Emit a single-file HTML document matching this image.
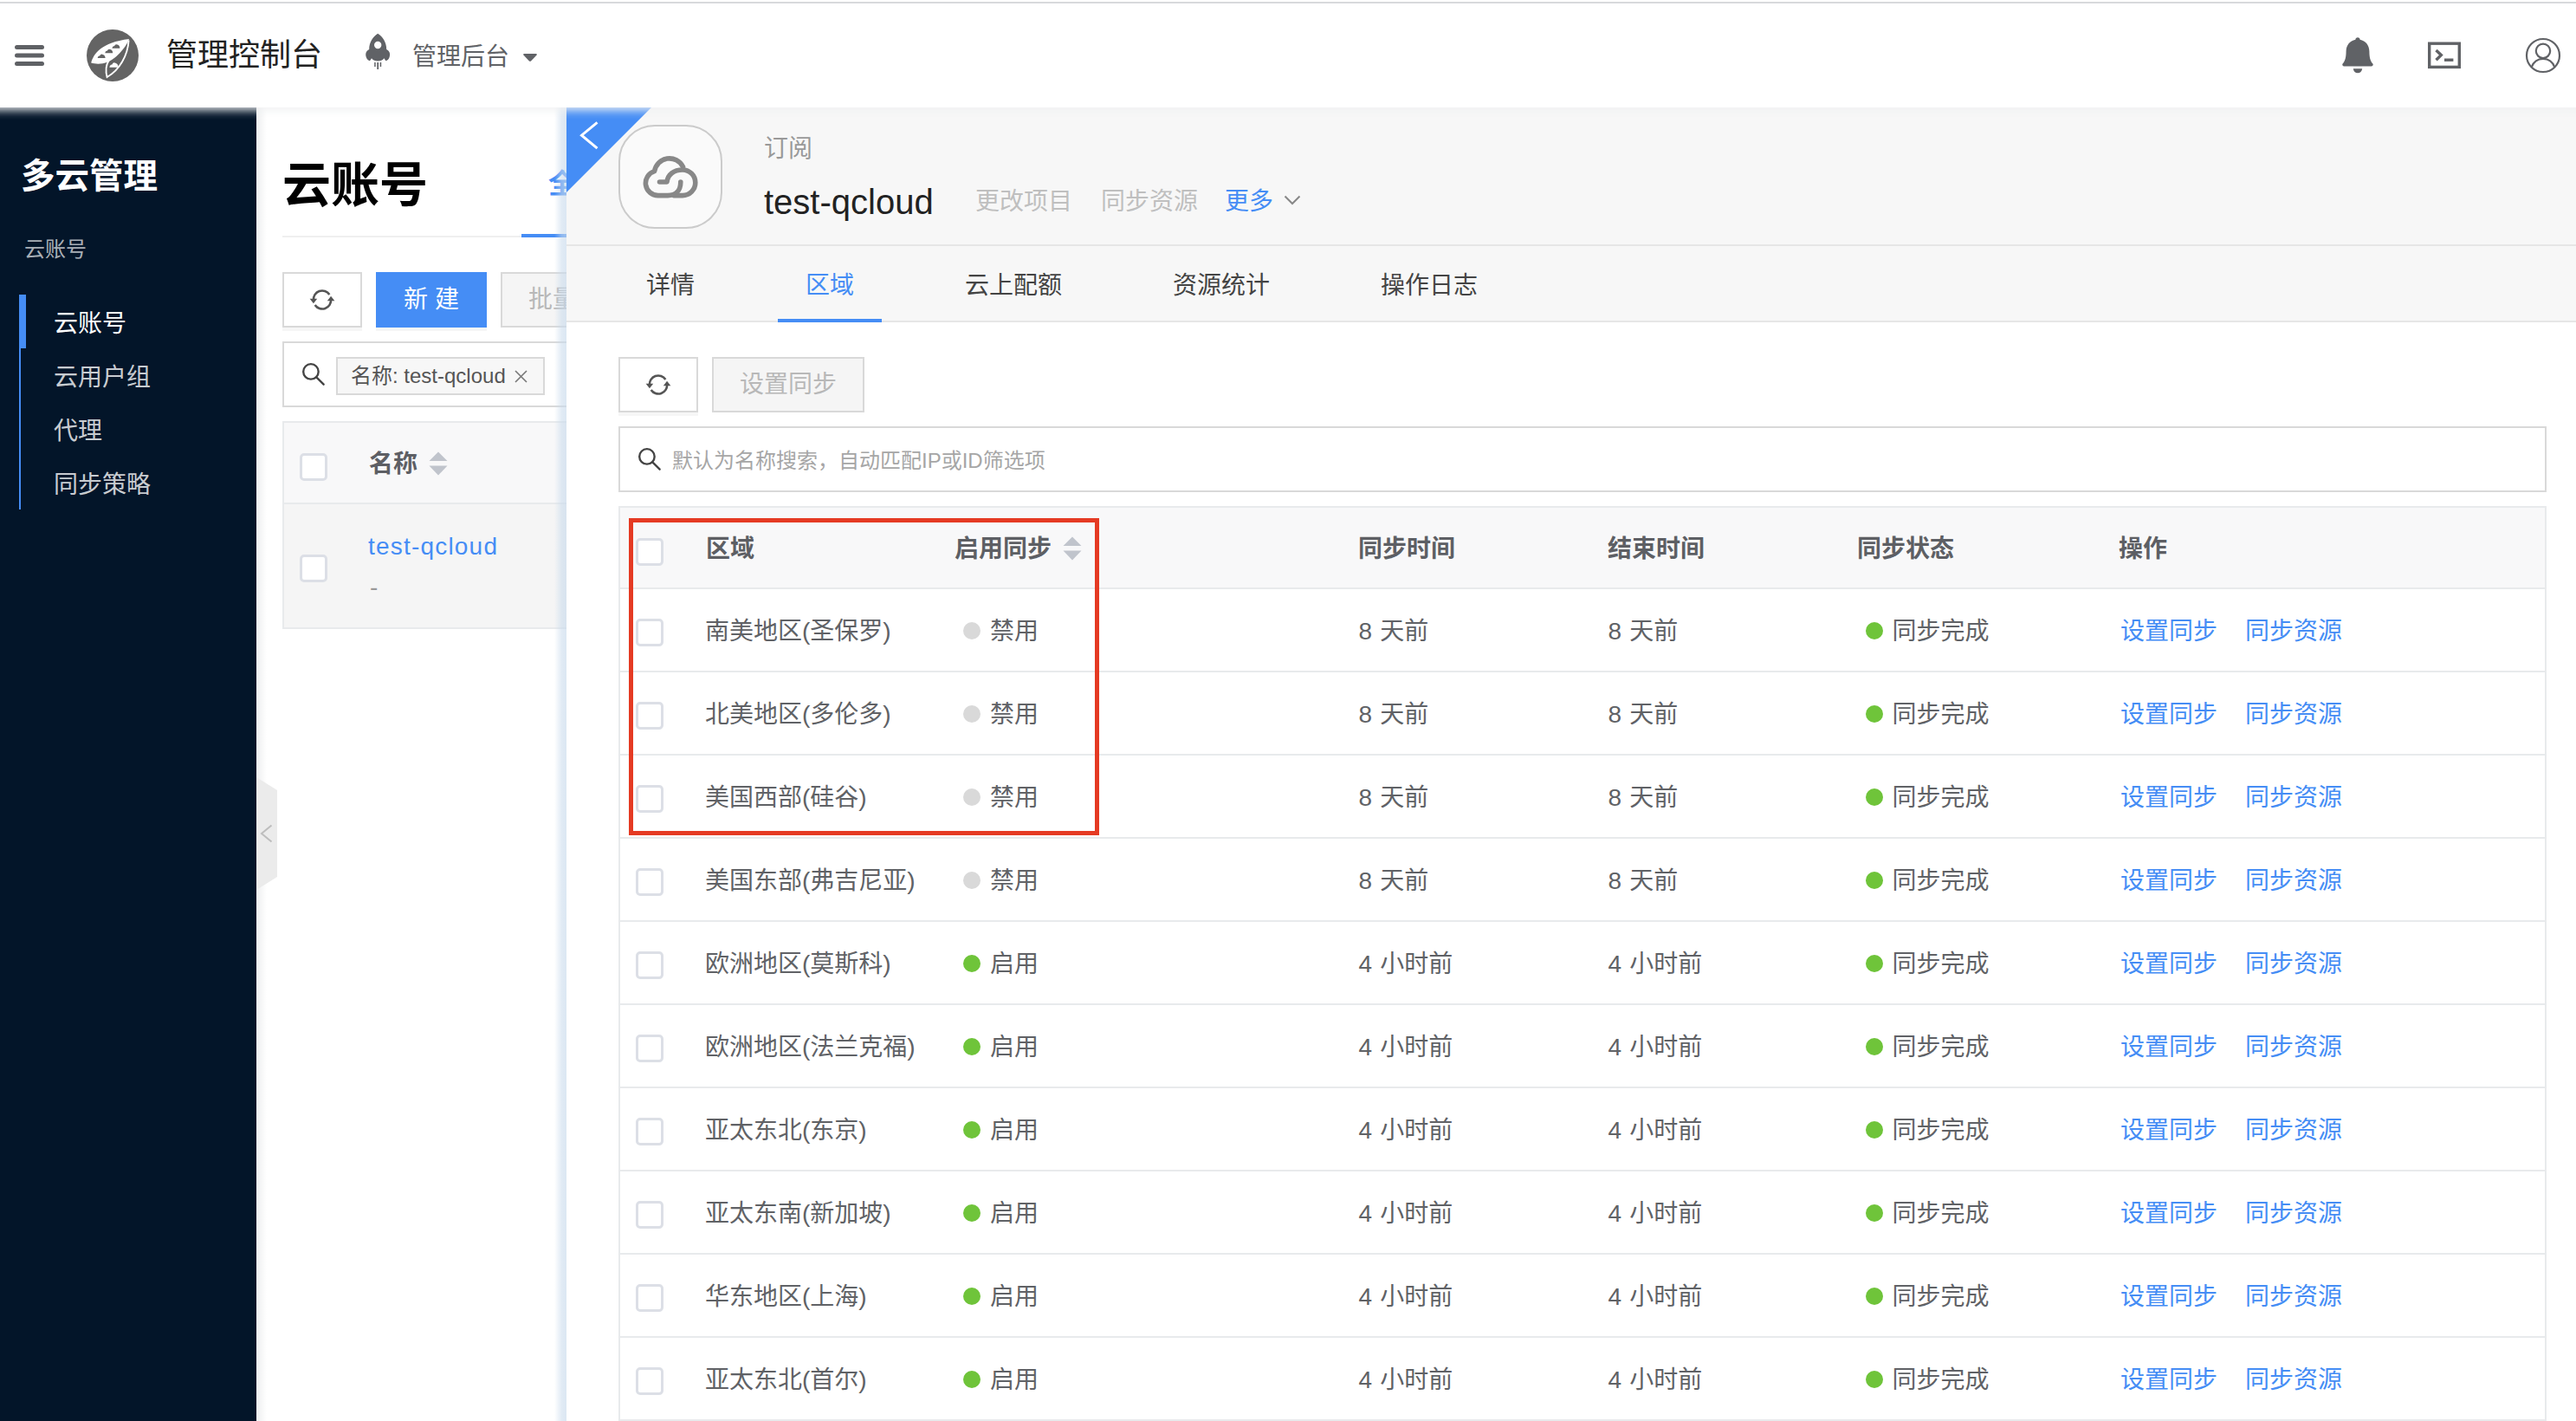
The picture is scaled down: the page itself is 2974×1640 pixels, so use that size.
<!DOCTYPE html>
<html lang="zh-CN"><head><meta charset="utf-8"><title>云账号</title>
<style>
*{margin:0;padding:0;box-sizing:border-box}
html,body{width:2974px;height:1640px;overflow:hidden;background:#fff}
body{position:relative;font-family:"Liberation Sans","Noto Sans CJK SC",sans-serif;color:#606266;font-size:28px}
div,span,i,svg,b{position:absolute;display:block;font-style:normal}
.t{white-space:nowrap;line-height:40px;height:40px}
b{font-weight:700}
/* header */
#hd{left:0;top:0;width:2974px;height:124px;background:#fff;z-index:50}
#hdsh{left:-60px;top:0;width:3094px;height:124px;background:#fff;box-shadow:0 3px 10px #f0f1f2;z-index:49}
#topline{left:0;top:2px;width:2974px;height:2px;background:#d8d9dc}
/* sidebar */
#sb{left:0;top:124px;width:296px;height:1516px;background:#031529;z-index:10}
/* list panel */
#lp{left:296px;top:124px;width:358px;height:1516px;background:#fff;overflow:hidden;z-index:5}
.btn{border:2px solid #d9d9d9;background:#fff;height:64px;box-shadow:0 4px 0 rgba(0,0,0,.035)}
.btn.dis{background:#f5f5f5;box-shadow:none;color:#b8b8b8}
.cb{width:32px;height:32px;border:3px solid #dcdfe6;border-radius:5px;background:#fff}
/* drawer */
#dr{left:654px;top:124px;width:2320px;height:1516px;background:#fff;z-index:20}
#drh{left:0;top:0;width:2320px;height:246px;background:#f7f7f7}
.ln{background:#e6e6e6;height:2px}
.tab{top:186px;font-size:28px;color:#444}
/* table */
#tbl{left:714px;top:0;width:2226px;height:1640px;z-index:30}
.row{left:0;width:2226px;height:96px;border-bottom:2px solid #e8eaec}
.row .t{top:29px}
.c1{left:100px}.c2{left:429px}.c3{left:854.5px;word-spacing:1.5px}.c4{left:1142.5px;word-spacing:1.5px}.c5{left:1470.5px}.c6{left:1734px}.c7{left:1878px}
.lk{color:#458DF5}
.dot{width:20px;height:20px;border-radius:50%;top:38px}
.dot.on{background:#6fc43a}.dot.off{background:#d9d9d9}
#redbox{left:726px;top:598px;width:543px;height:366px;border:5px solid #e53a23;z-index:40}
#tblside{left:714px;top:680px;width:2226px;height:960px;border-left:2px solid #e8eaec;border-right:2px solid #e8eaec;z-index:29}

</style></head><body>
<div id="hdsh"></div>
<div id="hd">
<div id="topline"></div>
<svg style="left:17px;top:52px" width="34" height="24" viewBox="0 0 34 24"><g fill="#5f6165"><rect x="0" y="0" width="34" height="5" rx="2.5"/><rect x="0" y="9.5" width="34" height="5" rx="2.5"/><rect x="0" y="19" width="34" height="5" rx="2.5"/></g></svg>
<svg style="left:100px;top:34px" width="60" height="60" viewBox="0 0 60 60">
<circle cx="30" cy="30" r="30" fill="#646464"/>
<path d="M5.2 38.5 C8 28 17 15 49.1 11 C45 22 32 35 24.5 37.5 C17 40.5 10 40 5.2 38.5Z" fill="#fff"/>
<path d="M48.6 12.5 C47.5 30 38 47 23.6 55 C21.5 47 23 40 25.5 36" fill="none" stroke="#fff" stroke-width="1.900"/>
<g fill="#646464"><path d="M29.4 21.8 q0.3-2.6 2.7-2.8 q1.1-2.8 3.4-1.4 q2.9 0.9 2.9 4.2z"/><path d="M21.200 27.300 q0.3-2.6 2.7-2.8 q1.1-2.8 3.4-1.4 q2.9 0.9 2.9 4.2z"/><path d="M12.600 33.100 q0.3-2.6 2.7-2.8 q1.1-2.8 3.4-1.4 q2.9 0.9 2.9 4.2z"/></g>
<path d="M26.400 43.800 q0.300-3 3-3.400 q1.400-3.200 4-1.600 q3.200 1.200 3.200 5z" fill="#fff"/>
</svg>
<span class="t" style="left:192px;top:42px;font-size:36px;color:#222;line-height:44px;height:44px">管理控制台</span>
<svg style="left:420px;top:37px" width="32" height="46" viewBox="0 0 32 46">
<g fill="#606266"><path d="M16.2 1.8 C22 5.5 26.2 12 26.2 20 C29.6 21.5 31 25 29.6 29 C28.8 31.5 27 33 25.4 33.2 L23.4 30.2 C22 32.4 19 33.4 16.2 33.4 C13.4 33.4 10.4 32.4 9 30.2 L7 33.2 C5.4 33 3.6 31.5 2.8 29 C1.4 25 2.8 21.5 6.2 20 C6.2 12 10.4 5.5 16.2 1.8Z"/>
<rect x="12.2" y="35" width="1.5" height="5"/><rect x="15.3" y="35" width="1.8" height="8"/><rect x="18.7" y="35" width="1.5" height="5"/></g>
<circle cx="16.2" cy="15" r="4.2" fill="#fff"/></svg>
<span class="t" style="left:476px;top:46px;font-size:28px;color:#606266">管理后台</span>
<svg style="left:603px;top:61px" width="18" height="11" viewBox="0 0 18 11"><path d="M2.2 1 H15.8 Q17.6 1.2 16.6 2.6 L10 9.4 Q9 10.2 8 9.4 L1.4 2.6 Q0.4 1.2 2.2 1Z" fill="#606266"/></svg>
<!-- bell -->
<svg style="left:2703px;top:42px" width="38" height="44" viewBox="0 0 38 44"><g fill="#606266">
<path d="M19 1.2 c1.6 0 2.6 1.2 2.6 2.6 c6.6 1.4 10.6 6.4 10.8 13.4 c0 7.6 1.4 11.6 4 14.4 c0.8 1.2 0.2 2.8-1.4 2.8 H3 c-1.6 0-2.2-1.6-1.4-2.8 c2.6-2.8 4-6.800 4-14.400 c0.200-7 4.200-12 10.800-13.400 c0-1.400 1-2.600 2.600-2.600z"/>
<path d="M13.800 37.200 h10.400 c-0.300 3-2.400 5-5.200 5 s-4.900-2-5.200-5z"/></g></svg>
<!-- terminal -->
<svg style="left:2803px;top:48px" width="38" height="32" viewBox="0 0 38 32"><g fill="none" stroke="#606266">
<rect x="1.700" y="2.200" width="34.600" height="27.200" stroke-width="3.400"/>
<path d="M9.500 10 l5.800 5.600 -5.800 5.600" stroke-width="3.400"/><path d="M19 21.200 h10.400" stroke-width="3.400"/></g></svg>
<!-- user -->
<svg style="left:2914px;top:42px" width="44" height="44" viewBox="0 0 44 44"><g fill="none" stroke="#606266" stroke-width="2.200">
<circle cx="22" cy="22" r="19"/><circle cx="22" cy="16.800" r="8.200"/><path d="M8.600 35.600 c2.400-6.400 7.400-9.800 13.400-9.800 s11 3.400 13.400 9.800"/></g></svg>
</div>

<div id="sb">
<span class="t" style="left:24px;top:51px;font-size:39.5px;font-weight:700;color:#fff;line-height:56px;height:56px">多云管理</span>
<span class="t" style="left:28px;top:144px;font-size:24px;color:rgba(255,255,255,.68)">云账号</span>
<div style="left:22px;top:216px;width:8px;height:62px;background:#458DF5"></div>
<div style="left:22px;top:278px;width:2px;height:186px;background:#458DF5"></div>
<span class="t" style="left:62px;top:230px;color:#fff">云账号</span>
<span class="t" style="left:62px;top:292px;color:rgba(255,255,255,.8)">云用户组</span>
<span class="t" style="left:62px;top:354px;color:rgba(255,255,255,.8)">代理</span>
<span class="t" style="left:62px;top:416px;color:rgba(255,255,255,.8)">同步策略</span>
</div>
<div id="lp">
<div style="left:0;top:0;width:12px;height:1516px;background:linear-gradient(90deg,rgba(0,21,41,.07),rgba(0,21,41,0))"></div>
<svg style="left:0;top:773px" width="24" height="130" viewBox="0 0 24 130"><path d="M0 0 L24 15 V115 L0 130Z" fill="#ebebeb"/><path d="M17.500 55.500 L6 65 L17.500 74.500" fill="none" stroke="#bdbdbd" stroke-width="2"/></svg>
<span class="t" style="left:30px;top:50px;font-size:56px;font-weight:700;color:#000;line-height:80px;height:80px">云账号</span>
<div style="left:30px;top:148px;width:330px;height:2px;background:#efefef"></div>
<span class="t" style="left:337px;top:68px;font-size:32px;font-weight:700;color:#458DF5">全部</span>
<div style="left:306px;top:146px;width:60px;height:4px;background:#458DF5"></div>
<div class="btn" style="left:30px;top:190px;width:92px">
<svg style="left:29px;top:15.500px" width="30" height="28" viewBox="0 0 28 26"><use href="#ic-sync"/></svg></div>
<div class="btn" style="left:138px;top:190px;width:128px;background:#458DF5;border-color:#458DF5"><span class="t" style="left:0;top:10px;width:124px;text-align:center;color:#fff">新 建</span></div>
<div class="btn dis" style="left:282px;top:190px;width:180px"><span class="t" style="left:30px;top:10px">批量操作</span></div>
<div style="left:30px;top:270px;width:400px;height:76px;border:2px solid #d9d9d9;background:#fff">
<svg style="left:19.500px;top:21.500px" width="28.500" height="28.500" viewBox="0 0 30 30"><use href="#ic-search"/></svg>
<div style="left:60px;top:16px;width:241px;height:44px;border:2px solid #d9d9d9;background:#f7f7f7">
<span class="t" style="left:15px;top:0;font-size:24px;color:#555">名称: test-qcloud</span>
<svg style="left:204px;top:13px" width="15" height="15" viewBox="0 0 15 15"><path d="M1 1 L14 14 M14 1 L1 14" stroke="#777" stroke-width="1.600" fill="none"/></svg>
</div></div>
<div style="left:30px;top:362px;width:400px;height:96px;background:#f8f8f9;border:2px solid #e8eaec"></div>
<div style="left:30px;top:456px;width:400px;height:146px;background:#f5f5f5;border:2px solid #e8eaec"></div>
<i class="cb" style="left:50px;top:399px"></i>
<b class="t" style="left:130px;top:392px;color:#5d5f64">名称</b>
<svg style="left:199px;top:397px" width="22" height="28" viewBox="0 0 22 28"><path d="M11 0.500 L21.500 11 H0.500Z M11 27.500 L21.500 16.500 H0.500Z" fill="#c0c4cc"/></svg>
<i class="cb" style="left:50px;top:516px"></i>
<span class="t" style="left:129px;top:487px;color:#458DF5;letter-spacing:1.2px">test-qcloud</span>
<span class="t" style="left:131px;top:534px;color:#999">-</span>
<div style="left:344px;top:0;width:14px;height:1516px;background:linear-gradient(90deg,rgba(200,218,236,0),rgba(200,218,236,.55) 60%,rgba(200,218,236,.65))"></div>
</div>
<svg width="0" height="0" style="position:absolute"><defs>
<g id="ic-sync" fill="none" stroke="#555" stroke-width="2.400"><path d="M4.600 13.500 A9.400 9.400 0 0 1 21.800 7.400"/><path d="M23.400 12.500 A9.400 9.400 0 0 1 6.200 18.600"/><path d="M0.600 11.800 L4.600 17 L8.600 11.800Z" fill="#555" stroke="none"/><path d="M19.400 14.200 L23.400 9 L27.400 14.200Z" fill="#555" stroke="none"/></g>
<g id="ic-search" fill="none" stroke="#444" stroke-width="2.500"><circle cx="11.500" cy="11.500" r="9.200"/><path d="M18.200 18.200 L27 27" stroke-linecap="round"/></g>
</defs></svg>

<div id="dr">
<div id="drh"></div>
<svg style="left:0;top:0" width="98" height="98" viewBox="0 0 98 98"><path d="M0 0 H98 L0 98Z" fill="#458DF5"/><path d="M35.500 17.400 L17.500 32.200 L35.500 47.200" fill="none" stroke="#fff" stroke-width="3"/></svg>
<div style="left:60px;top:20px;width:120px;height:120px;border:2px solid #cbcbcb;border-radius:42px;background:#fafafa">
<svg style="left:-2px;top:-2px" width="120" height="120" viewBox="0 0 120 120"><g fill="none" stroke="#888" stroke-width="5.600" stroke-linecap="round" stroke-linejoin="round">
<path d="M71.800 66 C71.800 76 66 81.600 57 81.600 L46 81.600 A14.300 14.300 0 0 1 41.600 53.600 A17.500 17.500 0 0 1 74.500 48.500"/>
<path d="M47.500 66 L56 66 C57 57.500 64 52 74 52 A14.800 14.800 0 0 1 74 81.600 L64 81.600"/>
</g></svg></div>
<span class="t" style="left:228px;top:28px;color:#999">订阅</span>
<span class="t" style="left:228px;top:81px;font-size:40px;color:#222;line-height:56px;height:56px">test-qcloud</span>
<span class="t" style="left:472px;top:89px;color:#bfbfbf">更改项目</span>
<span class="t" style="left:617px;top:89px;color:#bfbfbf">同步资源</span>
<span class="t" style="left:760px;top:89px;color:#458DF5">更多</span>
<svg style="left:828px;top:101px" width="20" height="12" viewBox="0 0 20 12"><path d="M1.500 1.500 L10 10 L18.500 1.500" fill="none" stroke="#888" stroke-width="2"/></svg>
<div class="ln" style="left:0;top:158px;width:2320px"></div>
<span class="t tab" style="left:92px">详情</span>
<span class="t tab" style="left:276px;color:#458DF5">区域</span>
<span class="t tab" style="left:460px">云上配额</span>
<span class="t tab" style="left:700px">资源统计</span>
<span class="t tab" style="left:940px">操作日志</span>
<div class="ln" style="left:0;top:246px;width:2320px"></div>
<div style="left:244px;top:244px;width:120px;height:4px;background:#458DF5"></div>
<div class="btn" style="left:60px;top:288px;width:92px"><svg style="left:29px;top:15.5px" width="30" height="28" viewBox="0 0 28 26"><use href="#ic-sync"/></svg></div>
<div class="btn dis" style="left:168px;top:288px;width:176px"><span class="t" style="left:0;top:10px;width:172px;text-align:center">设置同步</span></div>
<div style="left:60px;top:368px;width:2226px;height:76px;border:2px solid #d9d9d9;background:#fff">
<svg style="left:19.5px;top:21.500px" width="28.500" height="28.500" viewBox="0 0 30 30"><use href="#ic-search"/></svg>
<span class="t" style="left:60px;top:18px;font-size:24px;color:#a6a6a6">默认为名称搜索，自动匹配IP或ID筛选项</span>
</div>
<div style="left:60px;top:460px;width:2226px;height:96px;background:#f8f8f9;border:2px solid #e8eaec"></div>
<i class="cb" style="left:80px;top:497px"></i>
<b class="t" style="left:161px;top:490px;color:#5d5f64">区域</b>
<b class="t" style="left:448px;top:490px;color:#5d5f64">启用同步</b>
<svg style="left:573px;top:494.5px" width="22" height="28" viewBox="0 0 22 28"><path d="M11 0.500 L21.500 11 H0.500Z M11 27.500 L21.500 16.500 H0.500Z" fill="#c0c4cc"/></svg>
<b class="t" style="left:914px;top:490px;color:#5d5f64">同步时间</b>
<b class="t" style="left:1202px;top:490px;color:#5d5f64">结束时间</b>
<b class="t" style="left:1490px;top:490px;color:#5d5f64">同步状态</b>
<b class="t" style="left:1792px;top:490px;color:#5d5f64">操作</b>
</div>

<div id="tbl">
<div class="row" style="top:680px">
<i class="cb" style="left:20px;top:34px"></i>
<span class="t c1">南美地区(圣保罗)</span>
<i class="dot off" style="left:398px"></i><span class="t c2">禁用</span>
<span class="t c3">8 天前</span>
<span class="t c4">8 天前</span>
<i class="dot on" style="left:1440px"></i><span class="t c5">同步完成</span>
<span class="t c6 lk">设置同步</span><span class="t c7 lk">同步资源</span>
</div>
<div class="row" style="top:776px">
<i class="cb" style="left:20px;top:34px"></i>
<span class="t c1">北美地区(多伦多)</span>
<i class="dot off" style="left:398px"></i><span class="t c2">禁用</span>
<span class="t c3">8 天前</span>
<span class="t c4">8 天前</span>
<i class="dot on" style="left:1440px"></i><span class="t c5">同步完成</span>
<span class="t c6 lk">设置同步</span><span class="t c7 lk">同步资源</span>
</div>
<div class="row" style="top:872px">
<i class="cb" style="left:20px;top:34px"></i>
<span class="t c1">美国西部(硅谷)</span>
<i class="dot off" style="left:398px"></i><span class="t c2">禁用</span>
<span class="t c3">8 天前</span>
<span class="t c4">8 天前</span>
<i class="dot on" style="left:1440px"></i><span class="t c5">同步完成</span>
<span class="t c6 lk">设置同步</span><span class="t c7 lk">同步资源</span>
</div>
<div class="row" style="top:968px">
<i class="cb" style="left:20px;top:34px"></i>
<span class="t c1">美国东部(弗吉尼亚)</span>
<i class="dot off" style="left:398px"></i><span class="t c2">禁用</span>
<span class="t c3">8 天前</span>
<span class="t c4">8 天前</span>
<i class="dot on" style="left:1440px"></i><span class="t c5">同步完成</span>
<span class="t c6 lk">设置同步</span><span class="t c7 lk">同步资源</span>
</div>
<div class="row" style="top:1064px">
<i class="cb" style="left:20px;top:34px"></i>
<span class="t c1">欧洲地区(莫斯科)</span>
<i class="dot on" style="left:398px"></i><span class="t c2">启用</span>
<span class="t c3">4 小时前</span>
<span class="t c4">4 小时前</span>
<i class="dot on" style="left:1440px"></i><span class="t c5">同步完成</span>
<span class="t c6 lk">设置同步</span><span class="t c7 lk">同步资源</span>
</div>
<div class="row" style="top:1160px">
<i class="cb" style="left:20px;top:34px"></i>
<span class="t c1">欧洲地区(法兰克福)</span>
<i class="dot on" style="left:398px"></i><span class="t c2">启用</span>
<span class="t c3">4 小时前</span>
<span class="t c4">4 小时前</span>
<i class="dot on" style="left:1440px"></i><span class="t c5">同步完成</span>
<span class="t c6 lk">设置同步</span><span class="t c7 lk">同步资源</span>
</div>
<div class="row" style="top:1256px">
<i class="cb" style="left:20px;top:34px"></i>
<span class="t c1">亚太东北(东京)</span>
<i class="dot on" style="left:398px"></i><span class="t c2">启用</span>
<span class="t c3">4 小时前</span>
<span class="t c4">4 小时前</span>
<i class="dot on" style="left:1440px"></i><span class="t c5">同步完成</span>
<span class="t c6 lk">设置同步</span><span class="t c7 lk">同步资源</span>
</div>
<div class="row" style="top:1352px">
<i class="cb" style="left:20px;top:34px"></i>
<span class="t c1">亚太东南(新加坡)</span>
<i class="dot on" style="left:398px"></i><span class="t c2">启用</span>
<span class="t c3">4 小时前</span>
<span class="t c4">4 小时前</span>
<i class="dot on" style="left:1440px"></i><span class="t c5">同步完成</span>
<span class="t c6 lk">设置同步</span><span class="t c7 lk">同步资源</span>
</div>
<div class="row" style="top:1448px">
<i class="cb" style="left:20px;top:34px"></i>
<span class="t c1">华东地区(上海)</span>
<i class="dot on" style="left:398px"></i><span class="t c2">启用</span>
<span class="t c3">4 小时前</span>
<span class="t c4">4 小时前</span>
<i class="dot on" style="left:1440px"></i><span class="t c5">同步完成</span>
<span class="t c6 lk">设置同步</span><span class="t c7 lk">同步资源</span>
</div>
<div class="row" style="top:1544px">
<i class="cb" style="left:20px;top:34px"></i>
<span class="t c1">亚太东北(首尔)</span>
<i class="dot on" style="left:398px"></i><span class="t c2">启用</span>
<span class="t c3">4 小时前</span>
<span class="t c4">4 小时前</span>
<i class="dot on" style="left:1440px"></i><span class="t c5">同步完成</span>
<span class="t c6 lk">设置同步</span><span class="t c7 lk">同步资源</span>
</div>
<div class="row" style="top:1640px">
<i class="cb" style="left:20px;top:34px"></i>
<span class="t c1">华南地区(广州)</span>
<i class="dot on" style="left:398px"></i><span class="t c2">启用</span>
<span class="t c3">4 小时前</span>
<span class="t c4">4 小时前</span>
<i class="dot on" style="left:1440px"></i><span class="t c5">同步完成</span>
<span class="t c6 lk">设置同步</span><span class="t c7 lk">同步资源</span>
</div>
</div>
<div id="tblside"></div>
<div id="redbox"></div>
</body></html>
